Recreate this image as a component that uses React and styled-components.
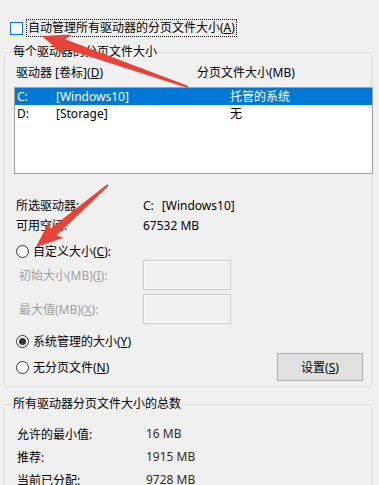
import React from "react"
import styled, { createGlobalStyle } from "styled-components"

const GlobalStyle = createGlobalStyle`
  html, body {
    margin: 0;
    padding: 0;
    background: #f0f0f0;
  }
  body {
    font-family: "Noto Sans", "Noto Sans CJK SC", sans-serif;
    font-size: 12px;
    color: #000;
  }
`

const Page = styled.div`
  position: relative;
  width: 379px;
  height: 485px;
  overflow: hidden;
  background: #f0f0f0;
  padding-top: 19px;
  box-sizing: border-box;
`

const CheckRow = styled.label`
  display: flex;
  align-items: center;
  height: 18px;
  padding-left: 10px;
`

const CheckBox = styled.span`
  width: 11px;
  height: 11px;
  border: 1px solid #0078d7;
  background: #fff;
  flex: none;
`

const FocusText = styled.span`
  margin-left: 3px;
  padding: 0 1px 0 1px;
  height: 16px;
  line-height: 15px;
  border: 1px dotted #000;
  white-space: nowrap;
`

const Group = styled.fieldset`
  margin: ${(p) => p.$top}px 7px 0 4px;
  padding: 0 0 ${(p) => p.$bottom}px 0;
  border: 1px solid #dcdcdc;
  min-width: 0;
`

const Legend = styled.legend`
  margin-left: 7px;
  padding: 0 1px;
  line-height: 16px;
  height: 16px;
  white-space: nowrap;
`

const HeaderRow = styled.div`
  display: flex;
  height: 16px;
  line-height: 16px;
  margin-top: 5px;
  padding-left: 11px;
  white-space: nowrap;
`

const HeaderCol = styled.span`
  width: ${(p) => p.$w}px;
  flex: none;
`

const ListBox = styled.div`
  margin: 6px -2px 0 9px;
  height: 85px;
  border: 1px solid #a0a0a0;
  background: #fff;
`

const ListRow = styled.div`
  display: flex;
  height: 17px;
  line-height: 17px;
  padding-left: 2px;
  background: ${(p) => (p.$selected ? "#0078d7" : "transparent")};
  color: ${(p) => (p.$selected ? "#fff" : "#000")};
  white-space: nowrap;
`

const ListCell = styled.span`
  width: ${(p) => p.$w}px;
  flex: none;
`

const InfoGrid = styled.div`
  display: grid;
  grid-template-columns: ${(p) => p.$col}px 1fr;
  grid-auto-rows: ${(p) => p.$row}px;
  align-items: center;
  margin-top: ${(p) => p.$top}px;
  padding-left: ${(p) => p.$left}px;
  white-space: nowrap;
`

const Value = styled.span`
  color: ${(p) => p.$color || "#000"};
`

const Gap = styled.span`
  display: inline-block;
  width: ${(p) => p.$w}px;
`

const RadioRow = styled.div`
  display: flex;
  align-items: center;
  justify-content: space-between;
  height: ${(p) => p.$h || 16}px;
  margin-top: ${(p) => p.$top}px;
  padding-left: 11px;
  padding-right: 8px;
`

const RadioLabel = styled.label`
  display: flex;
  align-items: center;
  white-space: nowrap;
`

const RadioCircle = styled.span`
  position: relative;
  width: 11px;
  height: 11px;
  border: 1px solid #333;
  border-radius: 50%;
  background: #fff;
  margin-right: 4px;
  flex: none;
  display: flex;
  align-items: center;
  justify-content: center;

  &::after {
    content: "";
    display: ${(p) => (p.$checked ? "block" : "none")};
    width: 7px;
    height: 7px;
    border-radius: 50%;
    background: #333;
  }
`

const FieldRow = styled.div`
  display: flex;
  align-items: center;
  height: 30px;
  margin-top: ${(p) => p.$top}px;
  padding-left: 14px;
`

const FieldLabel = styled.span`
  width: 124px;
  flex: none;
  color: #a0a0a0;
  white-space: nowrap;
`

const TextBox = styled.span`
  width: 86px;
  height: 28px;
  border: 1px solid #cccccc;
  box-shadow: inset 0 0 0 1px #f9f9f9;
  background: #f0f0f0;
`

const Button = styled.button`
  width: 86px;
  height: 28px;
  border: 1px solid #adadad;
  background: #e1e1e1;
  font-family: inherit;
  font-size: 12px;
  color: #000;
  padding: 0;
`

const Overlay = styled.svg`
  position: absolute;
  left: 0;
  top: 0;
  pointer-events: none;
`

function arrowPoints(tail, tip) {
  const dx = tail[0] - tip[0]
  const dy = tail[1] - tip[1]
  const len = Math.hypot(dx, dy)
  const ux = dx / len
  const uy = dy / len
  const px = -uy
  const py = ux
  const at = (a, p) =>
    `${(tip[0] + ux * a + px * p).toFixed(1)},${(tip[1] + uy * a + py * p).toFixed(1)}`
  return [
    at(0, 0),
    at(27, -11),
    at(23, -4.5),
    at(len, -1),
    at(len, 1),
    at(23, 4.5),
    at(27, 11),
  ].join(" ")
}

export default function App() {
  return (
    <>
      <GlobalStyle />
      <Page>
        <CheckRow>
          <CheckBox />
          <FocusText>
            自动管理所有驱动器的分页文件大小(<u>A</u>)
          </FocusText>
        </CheckRow>

        <Group $top={7} $bottom={5}>
          <Legend>每个驱动器的分页文件大小</Legend>
          <HeaderRow>
            <HeaderCol $w={181}>
              驱动器 [卷标](<u>D</u>)
            </HeaderCol>
            <span>分页文件大小(MB)</span>
          </HeaderRow>
          <ListBox>
            <ListRow $selected>
              <ListCell $w={39}>C:</ListCell>
              <ListCell $w={174}>[Windows10]</ListCell>
              <span>托管的系统</span>
            </ListRow>
            <ListRow>
              <ListCell $w={39}>D:</ListCell>
              <ListCell $w={174}>[Storage]</ListCell>
              <span>无</span>
            </ListRow>
          </ListBox>

          <InfoGrid $col={127} $row={20} $top={21} $left={11}>
            <span>所选驱动器:</span>
            <Value>
              C:<Gap $w={8} />[Windows10]
            </Value>
            <span>可用空间:</span>
            <Value>67532 MB</Value>
          </InfoGrid>

          <RadioRow $top={8}>
            <RadioLabel>
              <RadioCircle />
              自定义大小(<u>C</u>):
            </RadioLabel>
          </RadioRow>
          <FieldRow $top={1}>
            <FieldLabel>
              初始大小(MB)(<u>I</u>):
            </FieldLabel>
            <TextBox />
          </FieldRow>
          <FieldRow $top={4}>
            <FieldLabel>
              最大值(MB)(<u>X</u>):
            </FieldLabel>
            <TextBox />
          </FieldRow>
          <RadioRow $top={9}>
            <RadioLabel>
              <RadioCircle $checked />
              系统管理的大小(<u>Y</u>)
            </RadioLabel>
          </RadioRow>
          <RadioRow $top={4} $h={28}>
            <RadioLabel>
              <RadioCircle />
              无分页文件(<u>N</u>)
            </RadioLabel>
            <Button>
              设置(<u>S</u>)
            </Button>
          </RadioRow>
        </Group>

        <Group $top={9} $bottom={10}>
          <Legend>所有驱动器分页文件大小的总数</Legend>
          <InfoGrid $col={129} $row={23} $top={10} $left={12}>
            <span>允许的最小值:</span>
            <Value $color="#3e2812">16 MB</Value>
            <span>推荐:</span>
            <Value $color="#3e2812">1915 MB</Value>
            <span>当前已分配:</span>
            <Value $color="#3e2812">9728 MB</Value>
          </InfoGrid>
        </Group>

        <Overlay width="379" height="485" viewBox="0 0 379 485">
          <polygon points={arrowPoints([188, 87], [42, 36])} fill="#eb4236" />
          <polygon points={arrowPoints([108, 185], [36, 247])} fill="#eb4236" />
        </Overlay>
      </Page>
    </>
  )
}
